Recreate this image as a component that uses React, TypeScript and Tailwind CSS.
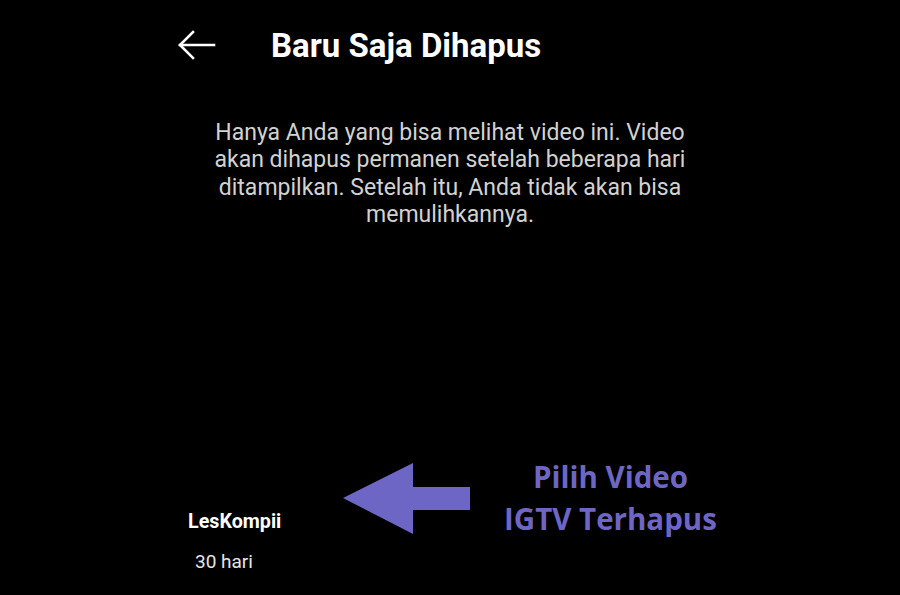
import React from "react";

const BackArrow = () => (
  <svg width="38" height="30" viewBox="0 0 38 30" fill="none" stroke="white" strokeWidth="2.6" strokeLinecap="square">
    <path d="M2 15 H36" />
    <path d="M15 2 L2 15 L15 28" />
  </svg>
);

const PointerArrow = () => (
  <svg width="128" height="72" viewBox="0 0 128 72">
    <polygon points="0,35 70,0 70,24 127,24 127,47 70,47 70,71" fill="#6d66c4" />
  </svg>
);

export default function App() {
  return (
    <div
      className="w-[900px] h-[595px] bg-black overflow-hidden flex flex-col"
      style={{ fontFamily: "Roboto, 'Liberation Sans', sans-serif" }}
    >
      <div className="h-[90px] flex items-center pl-[178px]">
        <BackArrow />
        <h1 className="ml-[55px] text-[33px] font-bold text-white leading-none">
          Baru Saja Dihapus
        </h1>
      </div>

      <p className="mt-[29px] text-center text-[23px] leading-[27.3px] text-[#d2d2d2]">
        Hanya Anda yang bisa melihat video ini. Video
        <br />
        akan dihapus permanen setelah beberapa hari
        <br />
        ditampilkan. Setelah itu, Anda tidak akan bisa
        <br />
        memulihkannya.
      </p>

      <div className="flex-1" />

      <div className="h-[140px] flex pl-[188px]">
        <div className="w-[155px] pt-[55px] flex flex-col">
          <span className="text-[19.7px] leading-[24px] font-bold text-white">LesKompii</span>
          <span className="mt-[16px] pl-[7px] text-[19px] leading-[24px] text-[#e6e6e6]">30 hari</span>
        </div>
        <div className="mt-[8px]">
          <PointerArrow />
        </div>
        <div
          className="ml-[33px] mt-[1px] text-center text-[29.5px] leading-[42px] font-bold text-[#6d66c4]"
          style={{ fontFamily: "'Open Sans', sans-serif" }}
        >
          <div>Pilih Video</div>
          <div>IGTV Terhapus</div>
        </div>
      </div>
    </div>
  );
}
